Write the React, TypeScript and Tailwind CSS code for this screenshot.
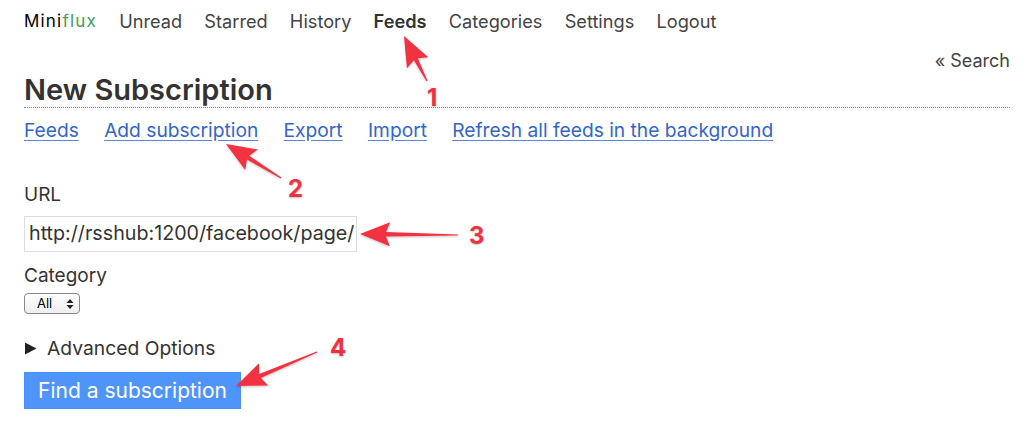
import React from 'react';

type Pt = [number, number];

function arrowPoints(tail: Pt, tip: Pt, headLen = 30, headHalf = 12, shaft = 2.2) {
  const dx = tip[0] - tail[0];
  const dy = tip[1] - tail[1];
  const len = Math.hypot(dx, dy);
  const ux = dx / len;
  const uy = dy / len;
  const nx = -uy;
  const ny = ux;
  const bx = tip[0] - ux * headLen;
  const by = tip[1] - uy * headLen;
  const nb = 0.6;
  const pts: Pt[] = [
    [tail[0] + nx * nb, tail[1] + ny * nb],
    [bx + ux * 4 + nx * shaft, by + uy * 4 + ny * shaft],
    [bx + nx * headHalf, by + ny * headHalf],
    tip,
    [bx - nx * headHalf, by - ny * headHalf],
    [bx + ux * 4 - nx * shaft, by + uy * 4 - ny * shaft],
    [tail[0] - nx * nb, tail[1] - ny * nb],
  ];
  return pts.map((p) => p.join(',')).join(' ');
}

const arrows: { tail: Pt; tip: Pt }[] = [
  { tail: [427, 81], tip: [404, 36] },
  { tail: [281, 178], tip: [226, 144] },
  { tail: [458, 235], tip: [360, 234] },
  { tail: [317, 352], tip: [236, 386] },
];

const labels = [
  { n: '1', cls: 'left-[427px] top-[86px]' },
  { n: '2', cls: 'left-[288px] top-[177px]' },
  { n: '3', cls: 'left-[469px] top-[224px]' },
  { n: '4', cls: 'left-[330px] top-[336px]' },
];

const nav = ['Unread', 'Starred', 'History', 'Feeds', 'Categories', 'Settings', 'Logout'];
const subLinks = ['Feeds', 'Add subscription', 'Export', 'Import', 'Refresh all feeds in the background'];

export default function App() {
  return (
    <div className="relative h-[444px] w-[1024px] overflow-hidden bg-white font-['Inter','Liberation_Sans',sans-serif] text-[#333]">
      <div className="pl-6 pr-[14px]">
        <header className="flex h-[43px] items-center gap-[22.2px] text-[18.2px] text-[#444]">
          <span className="tracking-[1.2px] text-[17px]">
            <span className="text-black">Mini</span>
            <span className="text-[#3f9e57]">flux</span>
          </span>
          {nav.map((item) => (
            <a key={item} className={item === 'Feeds' ? 'font-semibold text-[#333]' : ''}>
              {item}
            </a>
          ))}
        </header>

        <div className="flex h-[34px] items-center justify-end text-[18px] text-[#444]">« Search</div>

        <div className="border-b border-dotted border-[#888] pb-[4px]">
          <h1 className="text-[29px] leading-[26px] font-semibold text-[#333]">New Subscription</h1>
        </div>

        <nav className="flex h-[44px] items-center gap-[25.3px] text-[19.2px] text-[#3366cc]">
          {subLinks.map((l) => (
            <a key={l} className="underline underline-offset-[3px] decoration-[#5c85d6]">
              {l}
            </a>
          ))}
        </nav>

        <form className="mt-[28px] flex flex-col items-start text-[19px] text-[#333]">
          <label className="leading-[30px]">URL</label>
          <div className="mt-[6px] flex h-[36px] w-[333px] items-center overflow-hidden whitespace-nowrap border border-[#ddd] px-[4px] text-[19.7px] text-[#333]">
            http://rsshub:1200/facebook/page/
          </div>
          <label className="mt-[9px] leading-[30px]">Category</label>
          <div className="mt-[2px] flex h-[21px] w-[56px] shrink-0 items-center justify-between rounded-[4px] border border-[#888] bg-gradient-to-b from-white to-[#eee] pl-[12px] pr-[5px] text-[13px] text-black">
            <span>All</span>
            <svg width="8" height="12" viewBox="0 0 8 12">
              <path d="M4 1 L7.5 5 H0.5 Z" fill="#222" />
              <path d="M4 11 L7.5 7 H0.5 Z" fill="#222" />
            </svg>
          </div>
          <div className="mt-[20px] flex h-[28px] items-center gap-[10px]">
            <svg width="13" height="13" viewBox="0 0 13 13">
              <path d="M1 0.5 L12.5 6.5 L1 12.5 Z" fill="#222" />
            </svg>
            <span className="text-[19.3px]">Advanced Options</span>
          </div>
          <button
            type="button"
            className="mt-[10px] h-[37px] w-[217px] border border-[#4a8ff7] bg-[#4f94f8] text-[21px] text-white"
          >
            Find a subscription
          </button>
        </form>
      </div>

      <svg className="pointer-events-none absolute left-0 top-0" width="1024" height="444">
        <defs>
          <filter id="sh" x="-20%" y="-20%" width="140%" height="140%">
            <feDropShadow dx="0" dy="1" stdDeviation="1.2" floodColor="#000" floodOpacity="0.25" />
          </filter>
        </defs>
        {arrows.map((a, i) => (
          <polygon key={i} points={arrowPoints(a.tail, a.tip)} fill="#f2313f" filter="url(#sh)" />
        ))}
      </svg>
      {labels.map((l) => (
        <span
          key={l.n}
          className={`absolute ${l.cls} text-[24px] font-bold leading-none text-[#f2313f] [text-shadow:0_1px_2px_rgba(0,0,0,0.25)]`}
        >
          {l.n}
        </span>
      ))}
    </div>
  );
}
